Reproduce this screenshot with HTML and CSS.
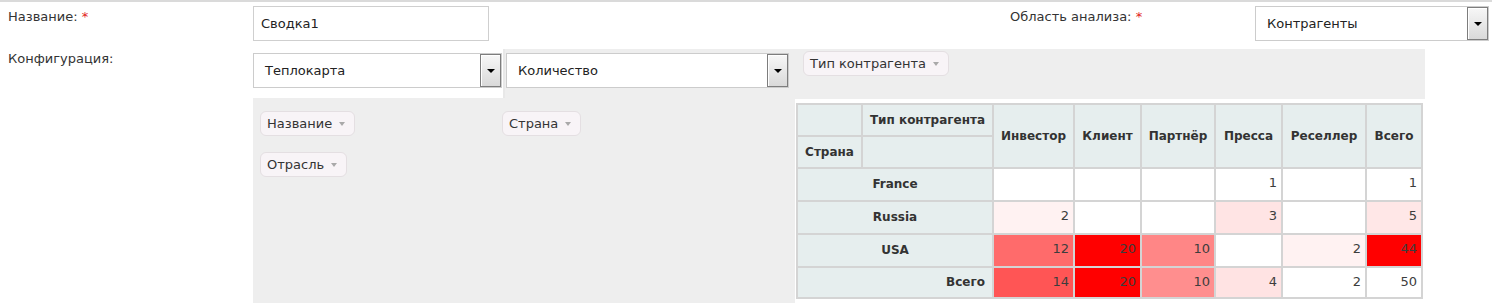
FILE: index.html
```html
<!DOCTYPE html>
<html lang="ru">
<head>
<meta charset="utf-8">
<title>Сводка</title>
<link rel="stylesheet" href="styles.css">
</head>
<body>
<div class="topline"></div>
<div class="form">
  <div class="row row1">
    <div class="label">Название: <span class="req">*</span></div>
    <div class="input">Сводка1</div>
    <div class="label label-area">Область анализа: <span class="req">*</span></div>
    <div class="select select-area"><span class="sel-text">Контрагенты</span><span class="arrow"></span></div>
  </div>
  <div class="row row2">
    <div class="label label-config">Конфигурация:</div>
    <div class="pvt">
      <div class="pvt-top">
        <div class="cell renderer">
          <div class="select select-renderer"><span class="sel-text">Теплокарта</span><span class="arrow"></span></div>
        </div>
        <div class="cell vals">
          <div class="select select-vals"><span class="sel-text">Количество</span><span class="arrow"></span></div>
        </div>
        <div class="cell cols">
          <span class="pill">Тип контрагента<span class="tri"></span></span>
        </div>
      </div>
      <div class="pvt-bottom">
        <div class="cell unused">
          <span class="pill">Название<span class="tri"></span></span>
          <span class="pill">Отрасль<span class="tri"></span></span>
        </div>
        <div class="cell rows">
          <span class="pill">Страна<span class="tri"></span></span>
        </div>
        <div class="cell output">
          <table class="pvt-table">
            <colgroup>
              <col class="c-row">
              <col class="c-axis">
              <col class="c-inv">
              <col class="c-cli">
              <col class="c-par">
              <col class="c-pre">
              <col class="c-res">
              <col class="c-tot">
            </colgroup>
            <thead>
              <tr class="h1">
                <th></th>
                <th>Тип контрагента</th>
                <th rowspan="2">Инвестор</th>
                <th rowspan="2">Клиент</th>
                <th rowspan="2">Партнёр</th>
                <th rowspan="2">Пресса</th>
                <th rowspan="2">Реселлер</th>
                <th rowspan="2">Всего</th>
              </tr>
              <tr class="h2">
                <th>Страна</th>
                <th></th>
              </tr>
            </thead>
            <tbody>
              <tr>
                <th colspan="2">France</th>
                <td></td>
                <td></td>
                <td></td>
                <td>1</td>
                <td></td>
                <td>1</td>
              </tr>
              <tr>
                <th colspan="2">Russia</th>
                <td style="background-color: rgb(255,242,242)">2</td>
                <td></td>
                <td></td>
                <td style="background-color: rgb(255,228,228)">3</td>
                <td></td>
                <td style="background-color: rgb(255,231,231)">5</td>
              </tr>
              <tr>
                <th colspan="2">USA</th>
                <td style="background-color: rgb(255,107,107)">12</td>
                <td style="background-color: rgb(255,0,0)">20</td>
                <td style="background-color: rgb(255,134,134)">10</td>
                <td></td>
                <td style="background-color: rgb(255,242,242)">2</td>
                <td style="background-color: rgb(255,0,0)">44</td>
              </tr>
              <tr class="totals">
                <th colspan="2" class="total-label">Всего</th>
                <td style="background-color: rgb(255,85,85)">14</td>
                <td style="background-color: rgb(255,0,0)">20</td>
                <td style="background-color: rgb(255,142,142)">10</td>
                <td style="background-color: rgb(255,227,227)">4</td>
                <td>2</td>
                <td>50</td>
              </tr>
            </tbody>
          </table>
        </div>
      </div>
    </div>
  </div>
</div>
</body>
</html>
```

FILE: styles.css
```css
* { box-sizing: border-box; }

html, body {
  margin: 0;
  padding: 0;
  background: #fff;
}

body {
  font-family: "DejaVu Sans", Verdana, sans-serif;
  font-size: 13px;
  line-height: 16px;
  color: #333;
}

.topline {
  height: 2px;
  background: #dadada;
}

.row {
  display: flex;
  align-items: flex-start;
}

.row1 {
  height: 47px;
}

.label {
  width: 253px;
  flex: none;
  padding-left: 8px;
  color: #333;
}

.row1 .label {
  padding-top: 7px;
}

.label-config {
  padding-top: 2px;
}

.req {
  color: #e21b1b;
}

.input {
  margin-top: 4px;
  width: 236px;
  height: 35px;
  border: 1px solid #cfcfcf;
  padding-left: 7px;
  display: flex;
  align-items: center;
  color: #222;
}

.label-area {
  width: 245px;
  margin-left: 521px;
  padding-left: 0;
}

.select {
  display: flex;
  height: 35px;
  border: 1px solid #cccccc;
  background: #fff;
}

.select-area {
  margin-top: 4px;
  width: 234px;
}

.sel-text {
  flex: 1;
  display: flex;
  align-items: center;
  padding-left: 11px;
  color: #222;
}

.arrow {
  width: 21px;
  border: 1px solid #7d7d7d;
  background: linear-gradient(#f7f7f7, #d9d9d9);
  box-shadow: inset 1px 1px 0 #ffffff;
  display: flex;
  align-items: center;
  justify-content: center;
}

.arrow::before {
  content: "";
  border-left: 4px solid transparent;
  border-right: 4px solid transparent;
  border-top: 4px solid #000;
}

/* pivot ui */
.pvt {
  width: 1172px;
}

.pvt-top {
  display: flex;
  height: 49px;
}

.renderer {
  width: 252px;
  background: #fff;
  padding-top: 4px;
  border-right: 2px solid #e8e8e8;
}

.select-renderer {
  width: 249px;
}

.vals {
  width: 290px;
  background: #eee;
  padding: 4px 0 0 1px;
}

.select-vals {
  width: 283px;
}

.cols {
  flex: 1;
  background: #eee;
  padding: 2px 0 0 8px;
}

.pvt-bottom {
  display: flex;
  height: 205px;
}

.unused {
  width: 242px;
  background: #eee;
  padding: 13px 7px;
  display: flex;
  flex-direction: column;
  align-items: flex-start;
  gap: 16px;
}

.rows {
  width: 300px;
  background: #eee;
  padding: 13px 7px;
}

.output {
  flex: 1;
  background: #fff;
  border-top: 1px solid #eee;
  padding: 4px 0 0 1px;
}

.pill {
  display: inline-flex;
  align-items: center;
  height: 25px;
  border: 1px solid #e4dfe2;
  background: #f8f4f7;
  border-radius: 6px;
  padding: 0 9px 0 6px;
  color: #333;
  white-space: nowrap;
}

.tri {
  margin-left: 7px;
  width: 0;
  height: 0;
  border-left: 3px solid transparent;
  border-right: 3px solid transparent;
  border-top: 4px solid #a9a9a9;
}

/* pivot table */
.pvt-table {
  border-collapse: separate;
  border-spacing: 0;
  table-layout: fixed;
  width: 627px;
  border: 1px solid #d4d4d4;
  font-size: 12px;
  line-height: 15px;
}

.c-row { width: 65px; }
.c-axis { width: 131px; }
.c-inv { width: 81px; }
.c-cli { width: 67px; }
.c-par { width: 74px; }
.c-pre { width: 67px; }
.c-res { width: 84px; }
.c-tot { width: 56px; }

.pvt-table th,
.pvt-table td {
  border: 1px solid #d4d4d4;
  white-space: nowrap;
}

.pvt-table th {
  background: #e6eeee;
  font-weight: bold;
  color: #333;
  text-align: center;
  vertical-align: middle;
  padding: 0 4px;
}

.pvt-table td {
  background: #fff;
  color: #3d3d3d;
  text-align: right;
  vertical-align: top;
  font-size: 13px;
  padding: 6px 4px 0 4px;
}

.pvt-table .total-label {
  text-align: right;
  padding-right: 7px;
}

.pvt-table tr.h1 { height: 32px; }
.pvt-table tr.h2 { height: 32px; }
.pvt-table tbody tr { height: 33px; }
.pvt-table tbody tr.totals { height: 31px; }
```
